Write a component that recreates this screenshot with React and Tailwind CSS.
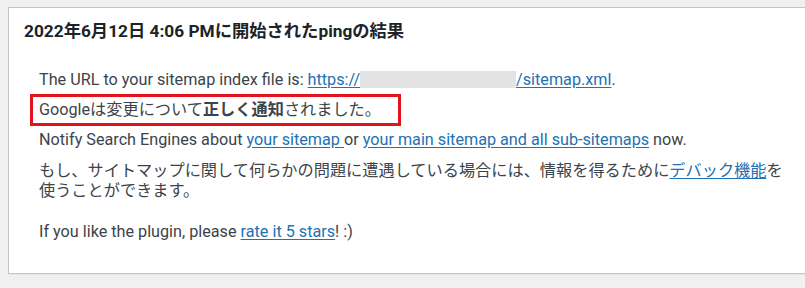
import React from 'react';

const Link = ({ children }) => (
  <a href="#" className="text-[#2271b1] underline underline-offset-2">{children}</a>
);

const App = () => {
  return (
    <div
      className="min-h-[288px] w-[805px] overflow-hidden bg-[#f0f0f1] pt-[7px] pl-[8px]"
      style={{ fontFamily: 'Roboto, "Noto Sans CJK JP", sans-serif' }}
    >
      <div className="w-[820px] border border-[#c3c4c7] bg-white pt-[11px] pb-[31px] shadow-[0_1px_1px_rgba(0,0,0,0.04)]">
        <h2 className="pl-[15px] text-[17.3px] font-bold leading-[24px] text-[#1d2327]">
          2022年6月12日 4:06 PMに開始されたpingの結果
        </h2>

        <div className="mt-[27px] pl-[21px] text-[16.2px] leading-[20px] text-[#3c434a]">
          <p className="pl-[9px]">
            The URL to your sitemap index file is: <Link>https://</Link>
            <span className="inline-block h-[17px] w-[156px] bg-[#e3e3e3] align-[-3px]"></span>
            <Link>/sitemap.xml</Link>.
          </p>

          <div className="mt-[4px] w-[371px] border-[3px] border-[#e3121c] py-[3px] pl-[6px]">
            Googleは変更について<strong className="font-bold">正しく通知</strong>されました。
          </div>

          <p className="mt-[4px] pl-[9px]">
            Notify Search Engines about <Link>your sitemap </Link> or <Link>your main sitemap and all sub-sitemaps</Link> now.
          </p>

          <p className="mt-[11px] pl-[9px]">
            もし、サイトマップに関して何らかの問題に遭遇している場合には、情報を得るために<Link>デバック機能</Link>を
            <br />
            使うことができます。
          </p>

          <p className="mt-[21px] pl-[9px]">
            If you like the plugin, please <Link>rate it 5 stars</Link>! :)
          </p>
        </div>
      </div>
    </div>
  );
};

export default App;
